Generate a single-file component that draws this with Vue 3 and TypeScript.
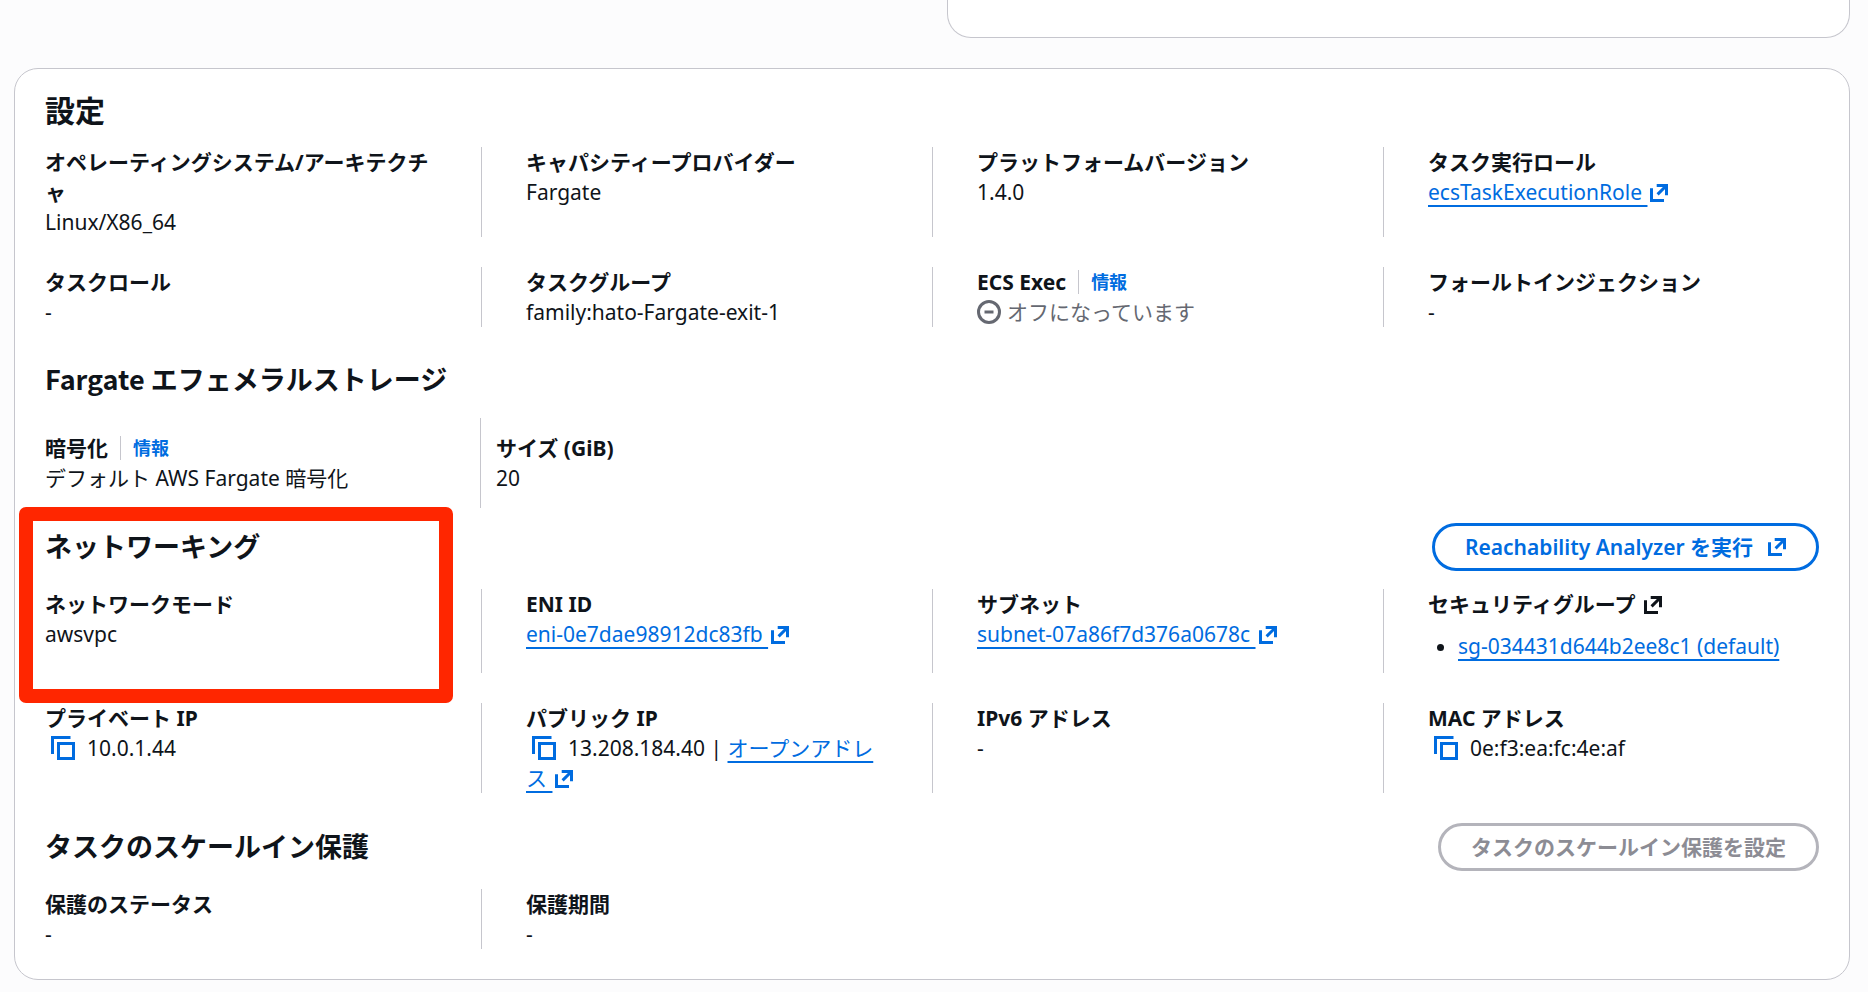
<script setup lang="ts">
import { h, type FunctionalComponent } from 'vue'

const ExternalIcon: FunctionalComponent = () =>
  h('svg', { class: 'icon-external', viewBox: '0 0 18 18', 'aria-hidden': 'true' }, [
    h('path', { d: 'M1.5 4.3V16.5H14M6.7 1.5H16.5V11.3M16.5 1.5L7.6 10.4' }),
  ])

const CopyIcon: FunctionalComponent = () =>
  h('svg', { class: 'icon-copy', viewBox: '0 0 24 24', 'aria-hidden': 'true' }, [
    h('path', { d: 'M1.5 18V1.5H19.5M7.5 7.5H22.5V22.5H7.5Z' }),
  ])

const publicIp = '13.208.184.40'
const privateIp = '10.0.1.44'
const macAddress = '0e:f3:ea:fc:4e:af'

function copy(text: string): void {
  navigator.clipboard?.writeText(text)
}
</script>

<template>
  <main class="page">
    <section class="card card-previous"></section>

    <section class="card card-settings">
      <h2>設定</h2>

      <dl class="grid">
        <div class="cell">
          <dt>オペレーティングシステム/アーキテクチャ</dt>
          <dd>Linux/X86_64</dd>
        </div>
        <div class="cell">
          <dt>キャパシティープロバイダー</dt>
          <dd>Fargate</dd>
        </div>
        <div class="cell">
          <dt>プラットフォームバージョン</dt>
          <dd>1.4.0</dd>
        </div>
        <div class="cell">
          <dt>タスク実行ロール</dt>
          <dd><a class="link" href="#role">ecsTaskExecutionRole&nbsp;</a><ExternalIcon class="blue" /></dd>
        </div>
        <div class="cell">
          <dt>タスクロール</dt>
          <dd>-</dd>
        </div>
        <div class="cell">
          <dt>タスクグループ</dt>
          <dd>family:hato-Fargate-exit-1</dd>
        </div>
        <div class="cell">
          <dt class="with-info">ECS Exec<a class="info" href="#exec-info">情報</a></dt>
          <dd class="status">
            <svg class="icon-status" viewBox="0 0 24 24" aria-hidden="true">
              <circle cx="12" cy="12" r="10.5" />
              <path d="M7.5 12H16.5" />
            </svg>
            オフになっています
          </dd>
        </div>
        <div class="cell">
          <dt>フォールトインジェクション</dt>
          <dd>-</dd>
        </div>
      </dl>

      <section class="block">
        <header class="block-header compact">
          <h3>Fargate エフェメラルストレージ</h3>
        </header>
        <dl class="grid storage">
          <div class="cell">
            <dt class="with-info">暗号化<a class="info" href="#encryption-info">情報</a></dt>
            <dd>デフォルト AWS Fargate 暗号化</dd>
          </div>
          <div class="cell">
            <dt>サイズ (GiB)</dt>
            <dd>20</dd>
          </div>
        </dl>
      </section>

      <section class="block networking">
        <header class="block-header">
          <h3>ネットワーキング</h3>
          <button class="button" type="button">Reachability Analyzer を実行<ExternalIcon /></button>
        </header>
        <dl class="grid">
          <div class="cell">
            <dt>ネットワークモード</dt>
            <dd>awsvpc</dd>
          </div>
          <div class="cell">
            <dt>ENI ID</dt>
            <dd><a class="link" href="#eni">eni-0e7dae98912dc83fb&nbsp;</a><ExternalIcon class="blue" /></dd>
          </div>
          <div class="cell">
            <dt>サブネット</dt>
            <dd><a class="link" href="#subnet">subnet-07a86f7d376a0678c&nbsp;</a><ExternalIcon class="blue" /></dd>
          </div>
          <div class="cell">
            <dt>セキュリティグループ&nbsp;<ExternalIcon /></dt>
            <dd>
              <ul>
                <li><a class="link" href="#sg">sg-034431d644b2ee8c1 (default)</a></li>
              </ul>
            </dd>
          </div>
          <div class="cell">
            <dt>プライベート IP</dt>
            <dd>
              <button class="copy" type="button" aria-label="プライベート IP をコピー" @click="copy(privateIp)"><CopyIcon /></button>{{ privateIp }}
            </dd>
          </div>
          <div class="cell">
            <dt>パブリック IP</dt>
            <dd>
              <button class="copy" type="button" aria-label="パブリック IP をコピー" @click="copy(publicIp)"><CopyIcon /></button>{{ publicIp }} | <a class="link" href="#open">オープンアドレス&nbsp;</a><ExternalIcon class="blue" />
            </dd>
          </div>
          <div class="cell">
            <dt>IPv6 アドレス</dt>
            <dd>-</dd>
          </div>
          <div class="cell">
            <dt>MAC アドレス</dt>
            <dd>
              <button class="copy" type="button" aria-label="MAC アドレスをコピー" @click="copy(macAddress)"><CopyIcon /></button>{{ macAddress }}
            </dd>
          </div>
        </dl>
        <div class="highlight" aria-hidden="true"></div>
      </section>

      <section class="block">
        <header class="block-header">
          <h3>タスクのスケールイン保護</h3>
          <button class="button" type="button" disabled>タスクのスケールイン保護を設定</button>
        </header>
        <dl class="grid">
          <div class="cell">
            <dt>保護のステータス</dt>
            <dd>-</dd>
          </div>
          <div class="cell">
            <dt>保護期間</dt>
            <dd>-</dd>
          </div>
        </dl>
      </section>
    </section>
  </main>
</template>

<style>
body {
  margin: 0;
  background: #fcfcfd;
}
</style>

<style scoped>
.page {
  display: flex;
  flex-direction: column;
  gap: 30px;
  padding: 0 18px 12px 14px;
  color: #0f141a;
  font-family: 'Noto Sans', 'Noto Sans CJK JP', sans-serif;
  font-size: 21px;
  line-height: 30px;
}

.card {
  box-sizing: border-box;
  border: 1px solid #c6c6cd;
  border-radius: 24px;
  background: #fff;
}

.card-previous {
  width: calc(50% - 15px);
  height: 38px;
  margin-left: auto;
  border-top: 0;
  border-top-left-radius: 0;
  border-top-right-radius: 0;
}

.card-settings {
  padding: 24px 30px 30px;
}

h2,
h3,
dl,
dd,
ul {
  margin: 0;
}

h2 {
  margin-bottom: 18px;
  font-size: 30px;
  line-height: 36px;
}

h3 {
  padding-bottom: 4px;
  font-family: 'Noto Sans CJK JP', sans-serif;
  font-size: 27px;
  font-weight: 700;
  line-height: 33px;
}

.grid {
  display: grid;
  grid-template-columns: repeat(4, minmax(0, 1fr));
  row-gap: 30px;
  margin: 0 -15px;
}

.cell {
  padding: 0 45px 0 44px;
  border-left: 1px solid #c6c6cd;
}

.cell:nth-child(4n + 1) {
  padding-left: 15px;
  border-left: 0;
}

.storage .cell {
  padding: 15px;
  border-left: 0;
}

.storage .cell:first-child {
  border-right: 1px solid #c6c6cd;
}

dt {
  font-weight: 700;
}

.block {
  margin-top: 30px;
}

.block-header {
  display: flex;
  align-items: center;
  justify-content: space-between;
  min-height: 48px;
  margin-bottom: 18px;
}

.block-header.compact {
  min-height: 46px;
  margin-bottom: 15px;
}

.networking {
  position: relative;
  margin-top: 15px;
}

.highlight {
  position: absolute;
  top: -16px;
  left: -26px;
  box-sizing: border-box;
  width: calc(25% - 10px);
  height: 196px;
  border: 14px solid #ff2600;
  border-radius: 7px;
  pointer-events: none;
}

.link {
  color: #006ce0;
  text-decoration: underline;
  text-decoration-thickness: 2px;
  text-decoration-skip-ink: none;
  text-underline-offset: 5px;
}

.with-info {
  display: flex;
  align-items: center;
}

.info {
  margin-left: 12px;
  padding-left: 12px;
  border-left: 1px solid #c6c6cd;
  color: #006ce0;
  font-size: 18px;
  line-height: 24px;
  text-decoration: none;
}

.status {
  display: flex;
  align-items: center;
  gap: 6px;
  color: #656871;
}

ul {
  margin: 12px 0;
  padding-left: 30px;
}

.button {
  display: inline-flex;
  align-items: center;
  gap: 12px;
  box-sizing: border-box;
  height: 48px;
  padding: 0 30px;
  border: 3px solid #006ce0;
  border-radius: 24px;
  background: #fff;
  color: #006ce0;
  font: inherit;
  font-weight: 600;
}

.button:disabled {
  border-color: #b4b4bb;
  color: #8c8c94;
}

.copy {
  margin: 0 6px 0 0;
  padding: 0 6px;
  border: 0;
  background: none;
  color: #006ce0;
  font: inherit;
  line-height: 24px;
  vertical-align: top;
}

svg {
  flex: none;
  fill: none;
  stroke: currentColor;
  stroke-width: 3;
}

.icon-external {
  width: 18px;
  height: 18px;
  margin-left: 3px;
  vertical-align: -2px;
}

.blue {
  color: #006ce0;
}

.icon-copy {
  display: block;
  width: 24px;
  height: 24px;
  margin: 3px 0;
}

.icon-status {
  width: 24px;
  height: 24px;
}
</style>
